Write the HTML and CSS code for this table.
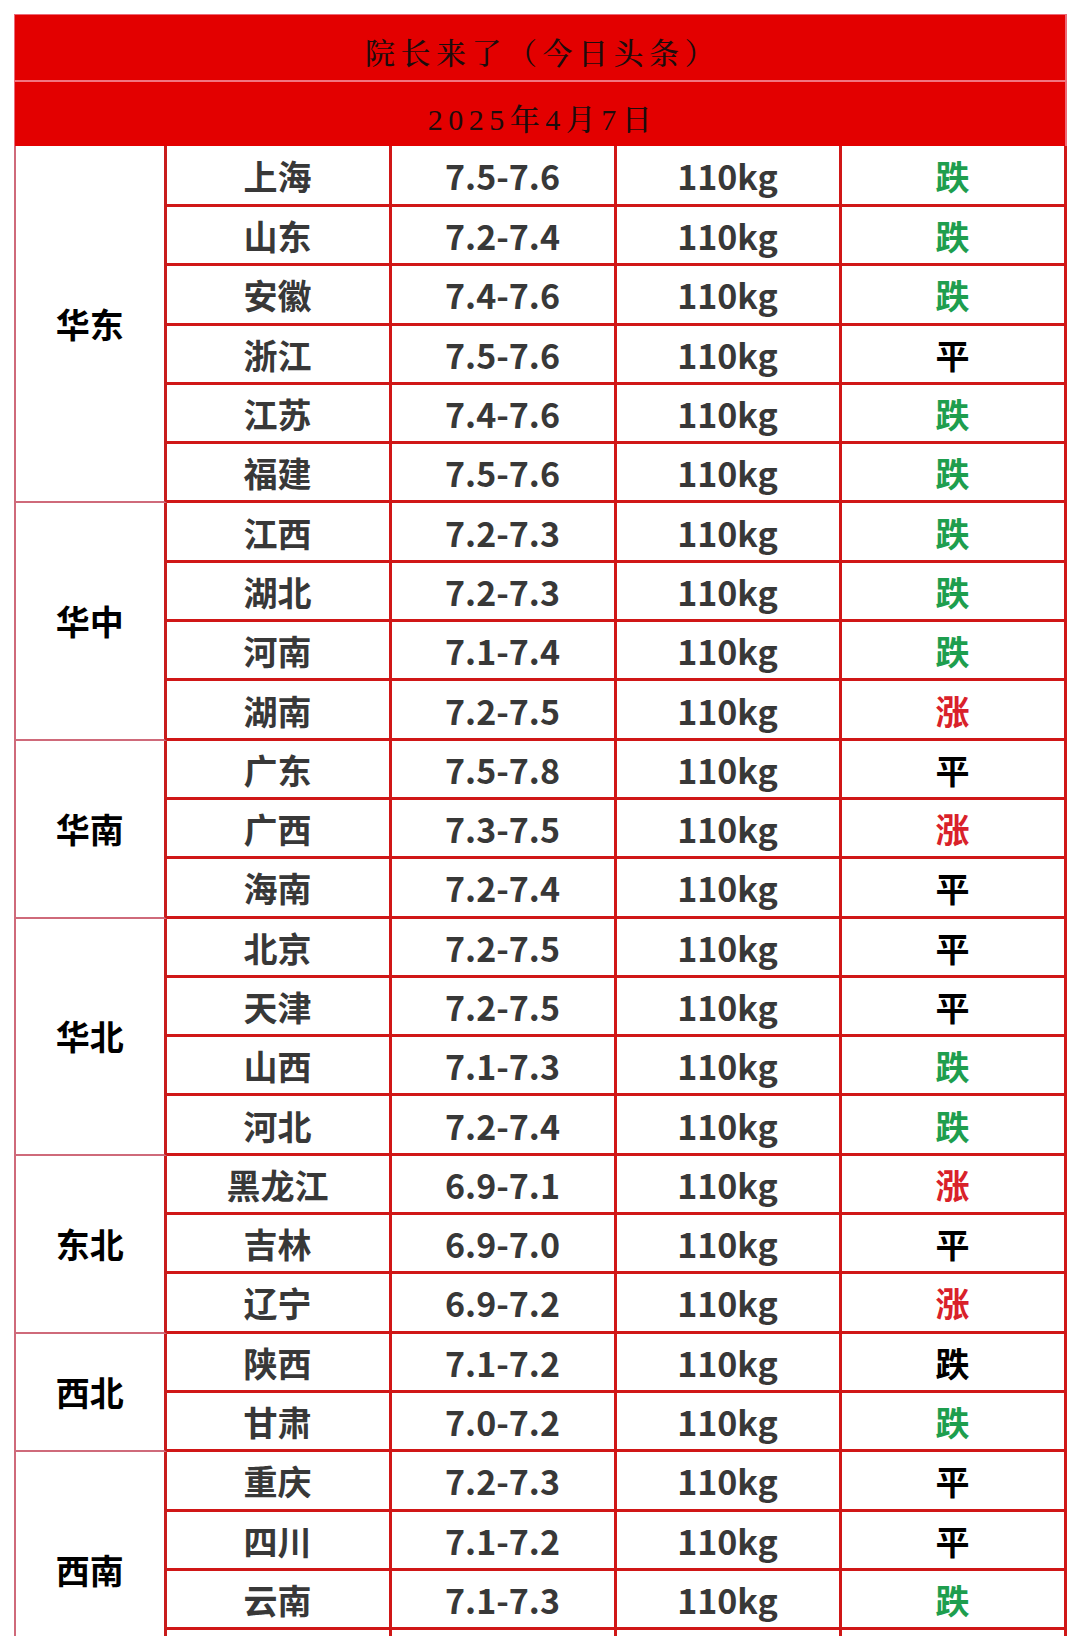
FILE: index.html
```html
<!DOCTYPE html>
<html lang="zh-CN">
<head>
<meta charset="utf-8">
<title>院长来了（今日头条）</title>
<link rel="stylesheet" href="styles.css">
</head>
<body>
<div class="sheet">
  <div class="band band-title"><span>院长来了（今日头条）</span></div>
  <div class="band band-date"><span>2025年4月7日</span></div>
  <div class="grid">
    <div class="region span6">华东</div>
    <div class="cell">上海</div><div class="cell">7.5-7.6</div><div class="cell">110kg</div><div class="cell down">跌</div>
    <div class="cell">山东</div><div class="cell">7.2-7.4</div><div class="cell">110kg</div><div class="cell down">跌</div>
    <div class="cell">安徽</div><div class="cell">7.4-7.6</div><div class="cell">110kg</div><div class="cell down">跌</div>
    <div class="cell">浙江</div><div class="cell">7.5-7.6</div><div class="cell">110kg</div><div class="cell flat">平</div>
    <div class="cell">江苏</div><div class="cell">7.4-7.6</div><div class="cell">110kg</div><div class="cell down">跌</div>
    <div class="cell">福建</div><div class="cell">7.5-7.6</div><div class="cell">110kg</div><div class="cell down">跌</div>

    <div class="region span4">华中</div>
    <div class="cell">江西</div><div class="cell">7.2-7.3</div><div class="cell">110kg</div><div class="cell down">跌</div>
    <div class="cell">湖北</div><div class="cell">7.2-7.3</div><div class="cell">110kg</div><div class="cell down">跌</div>
    <div class="cell">河南</div><div class="cell">7.1-7.4</div><div class="cell">110kg</div><div class="cell down">跌</div>
    <div class="cell">湖南</div><div class="cell">7.2-7.5</div><div class="cell">110kg</div><div class="cell up">涨</div>

    <div class="region span3">华南</div>
    <div class="cell">广东</div><div class="cell">7.5-7.8</div><div class="cell">110kg</div><div class="cell flat">平</div>
    <div class="cell">广西</div><div class="cell">7.3-7.5</div><div class="cell">110kg</div><div class="cell up">涨</div>
    <div class="cell">海南</div><div class="cell">7.2-7.4</div><div class="cell">110kg</div><div class="cell flat">平</div>

    <div class="region span4">华北</div>
    <div class="cell">北京</div><div class="cell">7.2-7.5</div><div class="cell">110kg</div><div class="cell flat">平</div>
    <div class="cell">天津</div><div class="cell">7.2-7.5</div><div class="cell">110kg</div><div class="cell flat">平</div>
    <div class="cell">山西</div><div class="cell">7.1-7.3</div><div class="cell">110kg</div><div class="cell down">跌</div>
    <div class="cell">河北</div><div class="cell">7.2-7.4</div><div class="cell">110kg</div><div class="cell down">跌</div>

    <div class="region span3">东北</div>
    <div class="cell">黑龙江</div><div class="cell">6.9-7.1</div><div class="cell">110kg</div><div class="cell up">涨</div>
    <div class="cell">吉林</div><div class="cell">6.9-7.0</div><div class="cell">110kg</div><div class="cell flat">平</div>
    <div class="cell">辽宁</div><div class="cell">6.9-7.2</div><div class="cell">110kg</div><div class="cell up">涨</div>

    <div class="region span2">西北</div>
    <div class="cell">陕西</div><div class="cell">7.1-7.2</div><div class="cell">110kg</div><div class="cell flat">跌</div>
    <div class="cell">甘肃</div><div class="cell">7.0-7.2</div><div class="cell">110kg</div><div class="cell down">跌</div>

    <div class="region span4">西南</div>
    <div class="cell">重庆</div><div class="cell">7.2-7.3</div><div class="cell">110kg</div><div class="cell flat">平</div>
    <div class="cell">四川</div><div class="cell">7.1-7.2</div><div class="cell">110kg</div><div class="cell flat">平</div>
    <div class="cell">云南</div><div class="cell">7.1-7.3</div><div class="cell">110kg</div><div class="cell down">跌</div>
    <div class="cell"></div><div class="cell"></div><div class="cell"></div><div class="cell"></div>
  </div>
</div>
</body>
</html>
```

FILE: styles.css
```css
html, body {
  margin: 0;
  padding: 0;
  background: #ffffff;
}

body {
  font-family: "Noto Sans CJK SC", "Noto Sans", sans-serif;
}

.sheet {
  width: 1052.5px;
  margin: 14px 0 0 14px;
}

.band {
  box-sizing: border-box;
  height: 66px;
  background: #e30000;
  border-left: 1px solid #ec6a78;
  border-right: 2px solid #ec6a78;
  display: flex;
  align-items: center;
  justify-content: center;
  font-family: "Liberation Serif", "Noto Serif CJK SC", "Noto Sans CJK SC", serif;
  font-size: 30px;
  font-weight: 500;
  color: #1c0c0c;
  letter-spacing: 5.5px;
}

.band span {
  margin-right: -5.5px;
}

.band-title {
  border-top: 1px solid #ec6a78;
  padding-top: 6px;
}

.band-date {
  border-top: 2px solid #f27580;
  padding-top: 6px;
}

.grid {
  display: grid;
  grid-template-columns: 152.5px repeat(4, 225px);
  grid-template-rows: 61px repeat(25, 59.3px);
}

.cell,
.region {
  box-sizing: border-box;
  display: flex;
  align-items: center;
  justify-content: center;
  font-size: 34px;
  font-weight: 700;
  line-height: 1;
}

.cell {
  border-right: 3px solid #d01717;
  border-bottom: 3px solid #d01717;
  color: #383838;
  padding-top: 2px;
}

.region {
  grid-column: 1;
  border-left: 2px solid #cf6a7a;
  border-bottom: 2px solid #cf6a7a;
  border-right: 3px solid #c81c1c;
  color: #000000;
}

.span2 { grid-row: span 2; }
.span3 { grid-row: span 3; }
.span4 { grid-row: span 4; }
.span6 { grid-row: span 6; }

.down { color: #1e9e4e; }
.up { color: #d9212a; }
.flat { color: #000000; }
```
